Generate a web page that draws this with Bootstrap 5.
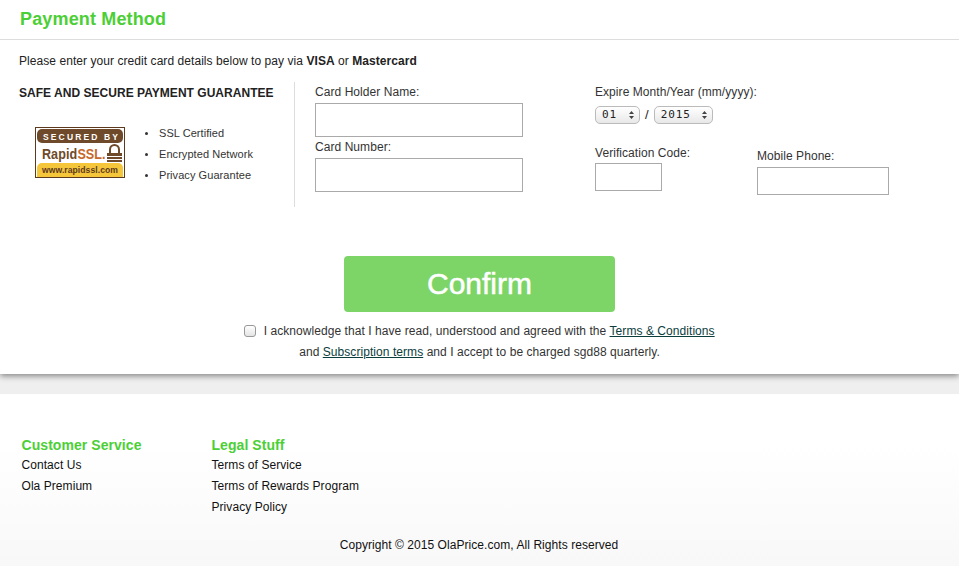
<!DOCTYPE html>
<html lang="en">
<head>
    <meta charset="UTF-8">
    <meta name="viewport" content="width=device-width, initial-scale=1.0">
    <title>Payment Method</title>
    <link href="https://cdn.jsdelivr.net/npm/bootstrap@5.3.2/dist/css/bootstrap.min.css" rel="stylesheet">
    <style>
        body { font-family: "Liberation Sans", Arial, sans-serif; font-size: 12px; letter-spacing: .06px; color: #222; background: #fff; overflow: hidden; height: 566px; }
        .pay-panel { height: 374px; background: #fff; box-shadow: 0 2px 6px rgba(0,0,0,.45); position: relative; }
        .pay-head { height: 40px; border-bottom: 1px solid #ddd; padding: 9px 0 0 20px; }
        .pay-head h1 { font-size: 18px; line-height: 21px; font-weight: 700; letter-spacing: .15px; color: #4ccf36; margin: 0; }
        .pay-intro { padding: 14px 0 0 19px; line-height: 14px; height: 42px; }
        .pay-form { padding-left: 19px; height: 125px; }
        .safe-col { width: 276px; height: 125px; border-right: 1px solid #ddd; }
        .safe-col h2 { font-size: 12px; line-height: 14px; font-weight: 700; letter-spacing: .03px; margin: 4px 0 0; color: #222; }
        .safe-body { padding: 27px 0 0 16px; }
        .safe-list { list-style: none; margin: -4px 0 0 19px; padding: 0; font-size: 11px; line-height: 21px; color: #333; }
        .safe-list li { padding-left: 15px; position: relative; }
        .safe-list li::before { content: ""; position: absolute; left: 1px; top: 9px; width: 3px; height: 3px; border-radius: 50%; background: #333; }
        .fld-label { display: block; font-size: 12px; line-height: 14px; margin: 0 0 4px; color: #333; }
        .fld { display: block; border: 1px solid #aaa; background: #fff; height: 34px; padding: 0 4px; border-radius: 0; outline: 0; }
        .card-col { width: 300px; padding: 3px 0 0 20px; }
        .expire-col { padding-top: 3px; width: 320px; }
        .date-sel { appearance: none; -webkit-appearance: none; display: block; height: 18px; border: 1px solid #bbb; border-radius: 5px; font-family: "DejaVu Sans Mono", "Liberation Mono", monospace; font-size: 11px; line-height: 16px; padding: 0 0 0 6px; color: #222; letter-spacing: .9px; background: linear-gradient(#fff, #e8e8e8); }
        .sel-wrap { position: relative; display: inline-block; }
        .sel-wrap svg { position: absolute; right: 6px; top: 5px; pointer-events: none; }
        .date-slash { font-size: 13px; line-height: 16px; padding: 0 1px; }
        .go-btn { display: block; width: 271px; height: 56px; margin: 0 auto; padding: 0; background: #7dd568; border: 0; border-radius: 4px; color: #fff; font-size: 30px; line-height: 56px; letter-spacing: 0; -webkit-text-stroke: .5px #fff; }
        .go-btn:hover { background: #7dd568; color: #fff; }
        .terms { text-align: center; line-height: 21px; margin-top: 9px; color: #333; }
        .terms a { color: #0b3d3d; }
        .terms input { appearance: none; -webkit-appearance: none; width: 12px; height: 12px; border: 1px solid #999; border-radius: 3px; vertical-align: -2px; margin: 0 4px 0 0; background: linear-gradient(#fff, #e4e4e4); }
        .strip { height: 20px; background: #efefef; }
        .foot { height: 172px; background: linear-gradient(#fff 30%, #f8f8f8); padding: 43px 0 0 21.5px; position: relative; }
        .foot h3 { font-size: 14px; line-height: 16px; font-weight: 700; color: #4ccf36; margin: 0; }
        .foot ul { list-style: none; margin: 0; padding: 2px 0 0; line-height: 21px; }
        .foot a { color: #111; text-decoration: none; }
        .foot-col { width: 190px; }
        .copy { text-align: center; margin: 17px 0 0 -21.5px; padding-right: 1px; color: #111; line-height: 14px; }
        .foot-inner { height: 84px; }
        .card-w { width: 208px; }
        .second-label { margin-top: 3px; }
        .expire-label { margin-bottom: 7px; }
        .code-row { margin-top: 22px; }
        .code-label { margin-bottom: 3px; }
    </style>
</head>
<body>

<!-- payment panel -->
<div class="pay-panel">
    <div class="pay-head"><h1>Payment Method</h1></div>
    <div class="pay-intro">Please enter your credit card details below to pay via <strong>VISA</strong> or <strong>Mastercard</strong></div>

    <div class="pay-form d-flex">
        <div class="safe-col flex-shrink-0">
            <h2>SAFE AND SECURE PAYMENT GUARANTEE</h2>
            <div class="safe-body d-flex">
                <svg width="90" height="51" viewBox="0 0 90 51" class="flex-shrink-0">
                    <rect x=".5" y=".5" width="89" height="50" fill="#fff" stroke="#5d3a1e"/>
                    <path d="M2 7a5 5 0 0 1 5-5h76a5 5 0 0 1 5 5v4a5 5 0 0 1-5 5H7a5 5 0 0 1-5-5z" fill="#6e4a2a"/>
                    <text x="8" y="13" font-family="Liberation Sans" font-size="8.500" font-weight="700" fill="#fff" textLength="75">SECURED BY</text>
                    <g transform="scale(.84 1)" font-family="Liberation Sans" font-size="15" font-weight="700">
                        <text x="8.300" y="32" fill="#6e4a2a">Rapid</text>
                        <text x="50.500" y="32" fill="#c8682a">SSL.</text>
                    </g>
                    <path d="M75 26v-3.500a4.500 4.500 0 0 1 9 0V26" fill="none" stroke="#6e4a2a" stroke-width="2"/>
                    <path d="M72 26h15v3H72zM72 30h15v2H72zM72 33h15v2H72z" fill="#6e4a2a"/>
                    <path d="M2 41a5 5 0 0 1 5-5h76a5 5 0 0 1 5 5v9H2z" fill="#f5c53a"/>
                    <text x="7" y="46" font-family="Liberation Sans" font-size="9" font-weight="700" fill="#5d3a1e" textLength="76" lengthAdjust="spacingAndGlyphs">www.rapidssl.com</text>
                </svg>
                <ul class="safe-list">
                    <li>SSL Certified</li>
                    <li>Encrypted Network</li>
                    <li>Privacy Guarantee</li>
                </ul>
            </div>
        </div>

        <div class="card-col flex-shrink-0">
            <label class="fld-label">Card Holder Name:</label>
            <input class="fld card-w" type="text">
            <label class="fld-label second-label">Card Number:</label>
            <input class="fld card-w" type="text">
        </div>

        <div class="expire-col">
            <label class="fld-label expire-label">Expire Month/Year (mm/yyyy):</label>
            <div class="d-flex align-items-center gap-1">
                <span class="sel-wrap"><select class="date-sel" style="width:45px"><option>01</option></select>
                    <svg width="5" height="8" viewBox="0 0 5 8"><path d="M2.500 0 5 3H0zM2.500 8 0 5h5z" fill="#444"/></svg></span>
                <span class="date-slash">/</span>
                <span class="sel-wrap"><select class="date-sel" style="width:59px"><option>2015</option></select>
                    <svg width="5" height="8" viewBox="0 0 5 8"><path d="M2.500 0 5 3H0zM2.500 8 0 5h5z" fill="#444"/></svg></span>
            </div>
            <div class="d-flex code-row">
                <div style="width:162px">
                    <label class="fld-label code-label">Verification Code:</label>
                    <input class="fld" style="width:67px;height:28px" type="text">
                </div>
                <div style="padding-top:3px">
                    <label class="fld-label">Mobile Phone:</label>
                    <input class="fld" style="width:132px;height:28px" type="text">
                </div>
            </div>
        </div>
    </div>

    <div style="padding-top:49px">
        <button class="btn go-btn" type="button">Confirm</button>
        <div class="terms">
            <input type="checkbox"> I acknowledge that I have read, understood and agreed with the <a href="#">Terms &amp; Conditions</a><br>
            and <a href="#">Subscription terms</a> and I accept to be charged sgd88 quarterly.
        </div>
    </div>
</div>
<div class="strip"></div>

<!-- footer -->
<footer class="foot">
    <div class="foot-inner d-flex">
        <div class="foot-col">
            <h3>Customer Service</h3>
            <ul>
                <li><a href="#">Contact Us</a></li>
                <li><a href="#">Ola Premium</a></li>
            </ul>
        </div>
        <div class="foot-col">
            <h3>Legal Stuff</h3>
            <ul>
                <li><a href="#">Terms of Service</a></li>
                <li><a href="#">Terms of Rewards Program</a></li>
                <li><a href="#">Privacy Policy</a></li>
            </ul>
        </div>
    </div>
    <div class="copy">Copyright © 2015 OlaPrice.com, All Rights reserved</div>
</footer>

</body>
</html>
